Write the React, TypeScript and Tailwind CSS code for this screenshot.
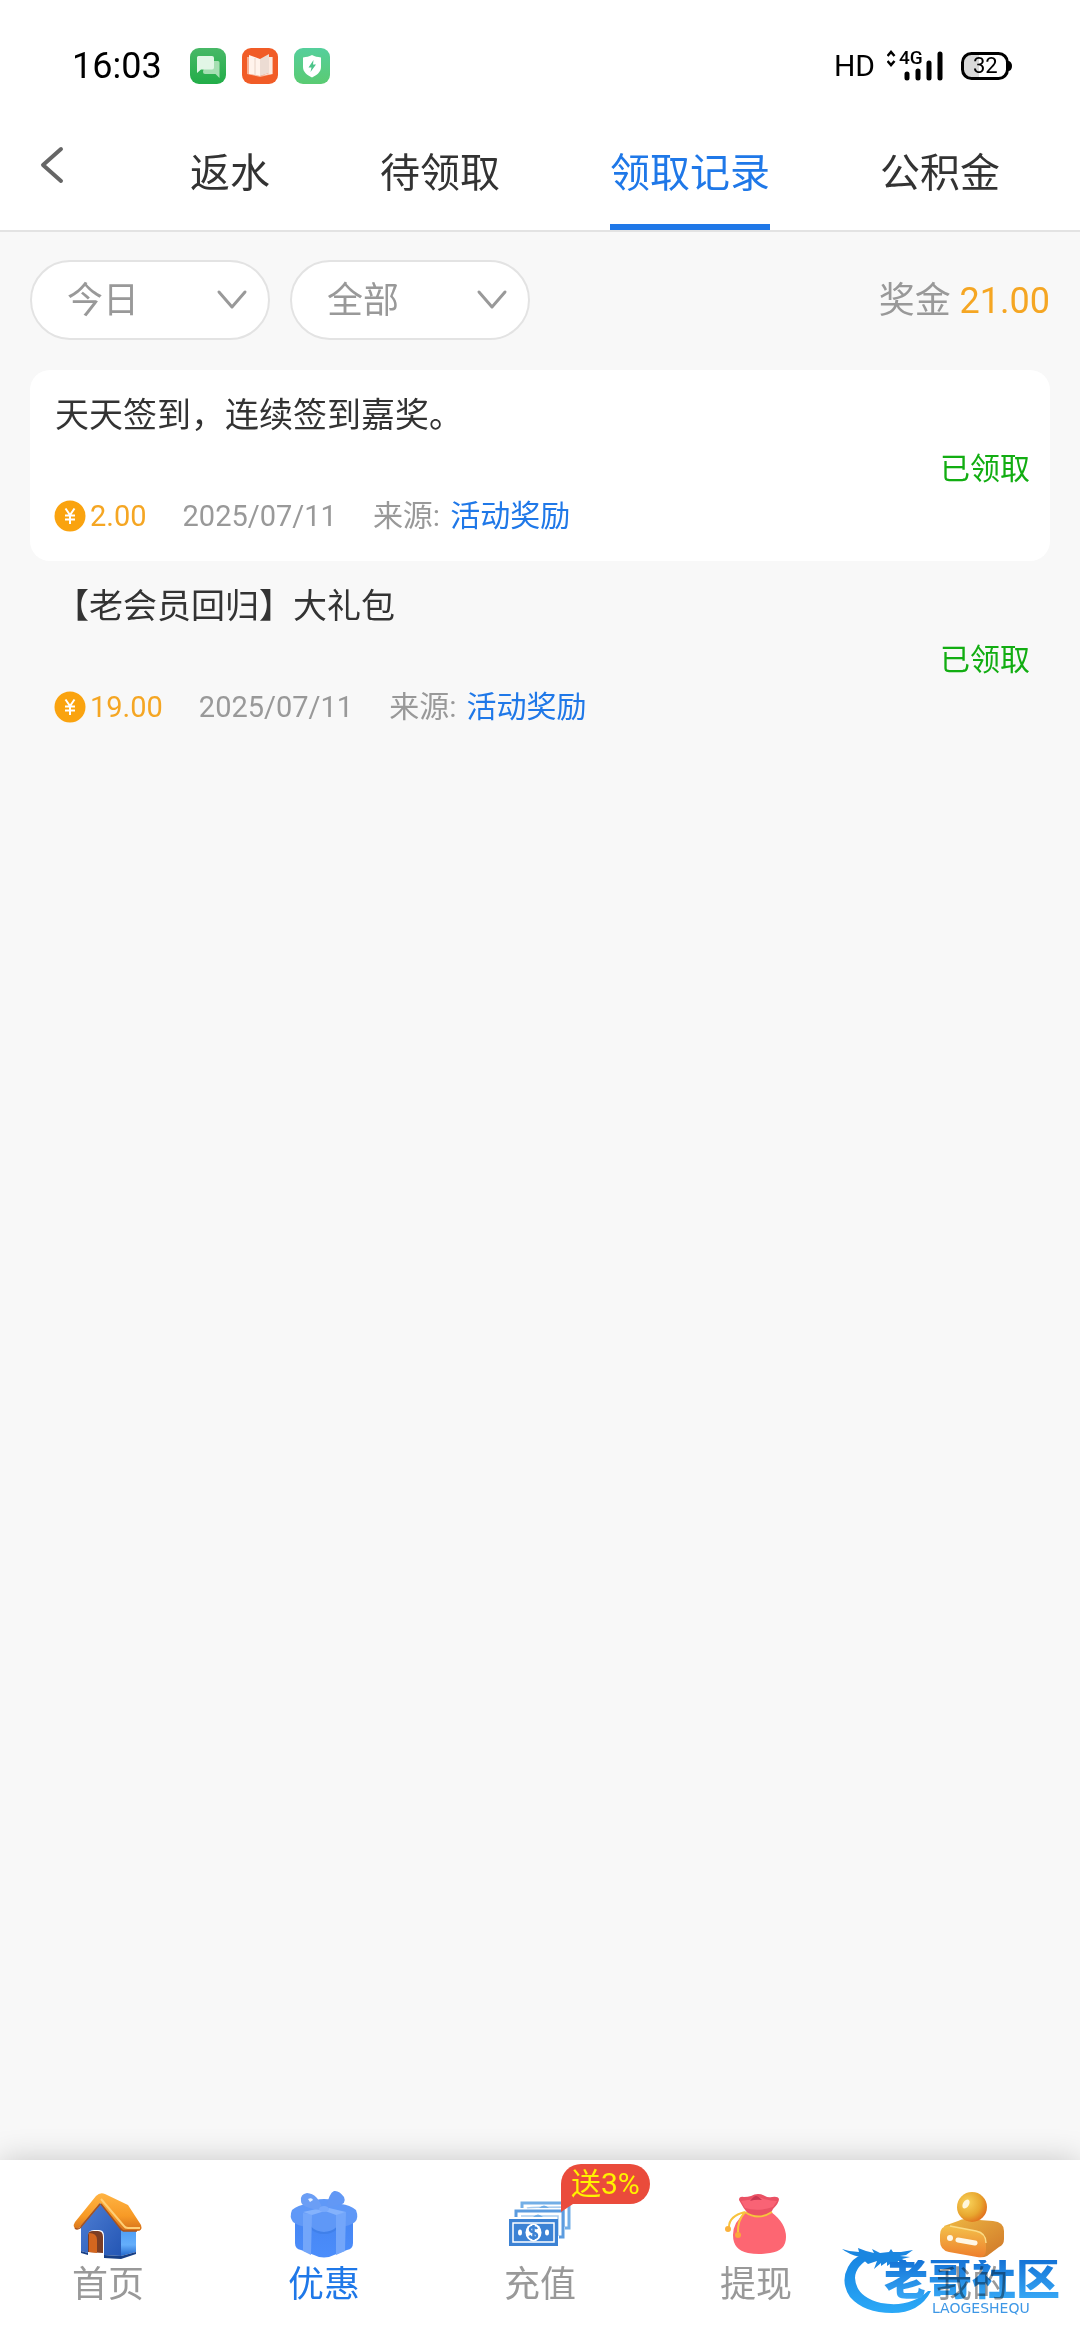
import { useState } from 'react'

const tabs = ['返水', '待领取', '领取记录', '公积金']

const records = [
  { id: 1, title: '天天签到，连续签到嘉奖。', amount: '2.00', date: '2025/07/11', source: '活动奖励', status: '已领取' },
  { id: 2, title: '【老会员回归】大礼包', amount: '19.00', date: '2025/07/11', source: '活动奖励', status: '已领取' },
]

function StatusBar() {
  return (
    <div className="flex h-[120px] items-center bg-white pt-3 pr-[68px] pl-[72px] font-[Roboto,sans-serif] text-black">
      <span className="text-[36px] leading-9">16:03</span>

      {/* Notifications */}
      <div className="ml-7 flex gap-4">
        <svg className="size-9" viewBox="0 0 36 36">
          <defs>
            <linearGradient id="msg" x1="0" y1="0" x2="0" y2="1">
              <stop offset="0" stopColor="#48b867" />
              <stop offset="1" stopColor="#22ad48" />
            </linearGradient>
          </defs>
          <rect width="36" height="36" rx="9" fill="url(#msg)" />
          <path d="M15 13h13a1.500 1.500 0 0 1 1.500 1.500V30l-4-4H15a2 2 0 0 1-2-2z" fill="#a5dfb2" />
          <path d="M8.500 8H22a2 2 0 0 1 2 2v9.500a2 2 0 0 1-2 2H11L7 25V9.500A1.500 1.500 0 0 1 8.500 8z" fill="#e2f6e6" />
        </svg>
        <svg className="size-9" viewBox="0 0 36 36">
          <rect width="36" height="36" rx="9" fill="#f15c27" />
          <path d="M5 9h3v17l10 2 10-2V9h3v17l-13 3L5 26z" fill="#f8b093" />
          <path d="M7 7l11 4v17L7 26z" fill="#fff3ec" />
          <path d="M18 11l9-5v19l-9 3z" fill="#ecdcd3" />
          <path d="M27 9h3v17l-12 2 9-3z" fill="#fbe9df" />
          <path d="M13 10v17" stroke="#e8d2c6" strokeWidth="1" />
        </svg>
        <svg className="size-9" viewBox="0 0 36 36">
          <defs>
            <linearGradient id="guard" x1="0" y1="0" x2="0" y2="1">
              <stop offset="0" stopColor="#55cf9c" />
              <stop offset="1" stopColor="#5acb72" />
            </linearGradient>
          </defs>
          <rect width="36" height="36" rx="9" fill="url(#guard)" />
          <path d="M18 7c3 1.500 5.500 2 9 2.500v9.500c0 5-4 8-9 10.500-5-2.500-9-5.500-9-10.500V9.500C12.500 9 15 8.500 18 7z" fill="#fff" />
          <path d="M19.500 12l-5 7.500h3L16.500 24l5.500-7.500h-3z" fill="#4cc58a" />
        </svg>
      </div>

      <span className="ml-auto text-[30px] leading-9">HD</span>

      {/* Signal */}
      <div className="relative ml-3 h-8 w-14">
        <svg className="size-full" viewBox="0 0 56 32" fill="none" stroke="#000">
          <path d="M0.500 6l3.500-4 3.500 4M0.500 11l3.500 4 3.500-4" strokeWidth="2.500" />
          <g strokeWidth="5" strokeLinecap="round">
            <path d="M20 24v4M31 21v7M42 13v15M53 4v24" />
          </g>
        </svg>
        <span className="absolute top-0 left-3 text-[19px] leading-4 font-medium">4G</span>
      </div>

      {/* Battery */}
      <div className="relative ml-[18px] h-7 w-[51px]">
        <svg className="size-full" viewBox="0 0 51 28">
          <path d="M11 2h7v24h-7a9 9 0 0 1-9-9v-6a9 9 0 0 1 9-9z" fill="#d9d9d9" />
          <rect x="1.500" y="1.500" width="45" height="25" rx="9" fill="none" stroke="#000" strokeWidth="3" />
          <path d="M47 9c2.500 0 4 2 4 5s-1.500 5-4 5z" />
        </svg>
        <span className="absolute top-0 left-3 text-[22px] leading-7">32</span>
      </div>
    </div>
  )
}

function Filter({ label, options }: { label: string; options: string[] }) {
  return (
    <div className="relative w-60">
      <select
        aria-label={label}
        className="block h-20 w-full appearance-none rounded-full border-2 border-[#e3e3e3] bg-white pt-[2px] pl-[35px] text-[36px] text-[#999]"
      >
        {options.map((o) => (
          <option key={o}>{o}</option>
        ))}
      </select>
      <svg className="pointer-events-none absolute top-[29px] right-[22px] h-[22px] w-8" viewBox="0 0 32 22" fill="none">
        <path d="M3 3l13 15L29 3" stroke="#999" strokeWidth="3" strokeLinecap="round" strokeLinejoin="round" />
      </svg>
    </div>
  )
}

function Coin() {
  return (
    <svg className="size-8" viewBox="0 0 32 32">
      <circle cx="16" cy="16" r="15.500" fill="#faa30f" />
      <path d="M11.500 8.500L16 15l4.500-6.500M16 15v9M11 15.500h10M11 19.500h10" fill="none" stroke="#fff" strokeWidth="2" />
    </svg>
  )
}

function HomeIcon() {
  return (
    <svg className="h-[70px] w-[72px]" viewBox="0 0 72 70">
      <defs>
        <linearGradient id="roof" x1="0" y1="0" x2="0" y2="1">
          <stop offset="0" stopColor="#ffb443" />
          <stop offset="0.600" stopColor="#f79a26" />
          <stop offset="1" stopColor="#d5701a" />
        </linearGradient>
        <linearGradient id="wall" x1="0" y1="0" x2="1" y2="1">
          <stop offset="0" stopColor="#4f7fd4" />
          <stop offset="1" stopColor="#2456b4" />
        </linearGradient>
        <linearGradient id="side" x1="0" y1="0" x2="0" y2="1">
          <stop offset="0" stopColor="#4d9df5" />
          <stop offset="0.600" stopColor="#64aefb" />
          <stop offset="1" stopColor="#2468cc" />
        </linearGradient>
      </defs>
      <path d="M49 38h15v24l-15 4z" fill="url(#side)" />
      <path d="M9 34L28 12l21 26v28l-17-1V46q0-6-5-6h-5q-6 0-6 6v17l-7-2z" fill="url(#wall)" />
      <path d="M16 45q0-4 5-4h5q5 0 5 6v16l-15-1z" fill="#7c3e25" />
      <path d="M17 43q8 0 8 7v13l-8-1z" fill="#d4661f" />
      <path d="M9 61l7 2v2l-7-2zM32 65l17 1 15-4v2l-15 5-17-1z" fill="#173f86" />
      <path d="M24 6q4-4 9-2l23 11 13 20q2 6-4 6H53q-3 0-5-3L28 13 8 37q-4 4-6 0-1-2 1-5z" fill="url(#roof)" />
      <path d="M29 9l23 27q1 2 4 2h12" fill="none" stroke="#ffcf75" strokeWidth="2" />
      <path d="M28 14L8 38q-3 2-5 0M29 14l19 24q2 3 5 3h12" fill="none" stroke="#a9521c" strokeWidth="1.500" />
    </svg>
  )
}

function GiftIcon() {
  return (
    <svg className="h-[70px] w-[72px]" viewBox="0 0 72 70">
      <defs>
        <linearGradient id="box" x1="0" y1="0" x2="0" y2="1">
          <stop offset="0" stopColor="#4686f3" />
          <stop offset="1" stopColor="#4b8dfb" />
        </linearGradient>
      </defs>
      <path d="M7 28h58v25q0 6-6 7l-13 5q-10 5-20 0l-13-5q-6-1-6-7z" fill="url(#box)" />
      <path d="M4 20q6-5 15-6 8-5 17-5t17 5q9 1 15 6 3 8-1 12-5 4-14 5-7 5-17 5t-17-5Q10 36 5 32q-4-5-1-12z" fill="#5f98f7" />
      <path d="M22 37q6 6 14 6t14-6" fill="none" stroke="#4080ea" strokeWidth="2" />
      <path d="M15 23l9 1-1 41-8-4zM48 24l10-2-1 39-9 4z" fill="#73a6fa" />
      <path d="M15 22l18-4q4 2 8 0l17 4-10 3-11-4-13 4z" fill="#84b2fc" />
      <path d="M34 18q-4-14-15-15-7 1-6 8 0 7 20 9z" fill="#6b9ef5" />
      <path d="M38 18Q41 3 46 1q5-1 10 6 3 7-6 8z" fill="#6298f5" />
      <path d="M20 9q4-2 5 1l-3 2z" fill="#e4efff" />
      <ellipse cx="36" cy="19" rx="5" ry="3" fill="#78a9fb" />
    </svg>
  )
}

function MoneyIcon() {
  return (
    <svg className="h-[70px] w-[72px]" viewBox="0 0 72 70" fill="none">
      <path d="M18 18V13H65V38H61" stroke="#72aee6" strokeWidth="3" />
      <path d="M23 18q1-1 37-1v20" stroke="#a9cdf0" strokeWidth="1.500" />
      <path d="M35 18q5-5 10 0z" fill="#72aee6" />
      <path d="M12 27v-6H59V47H55" stroke="#5c9cdf" strokeWidth="3" />
      <path d="M17 26h37v20" stroke="#a9cdf0" strokeWidth="1.500" />
      <path d="M29 27q5-5 10 0z" fill="#72aee6" />
      <path d="M5 29h49v27H5z" fill="#3c82d4" />
      <path d="M9 33h41v19H9z" stroke="#fff" strokeWidth="1.500" />
      <ellipse cx="29.500" cy="42.500" rx="8" ry="9" fill="#fff" />
      <ellipse cx="16" cy="42.500" rx="2" ry="3" fill="#fff" />
      <ellipse cx="43" cy="42.500" rx="2" ry="3" fill="#fff" />
      <path d="M33 39q-1-2-3.500-2-3.500 0-3.500 2.500 0 2 3.500 3t3.500 3q0 2.500-3.500 2.500-3 0-4-2.500M29.500 35v15" stroke="#3c82d4" strokeWidth="2.500" />
    </svg>
  )
}

function BagIcon() {
  return (
    <svg className="h-[70px] w-[72px]" viewBox="0 0 72 70">
      <path d="M26 22h25q15 11 15 25 0 14-16 16-11 2-22 0-15-3-15-18 0-13 13-23z" fill="#fd6672" />
      <path d="M19 10q0-4 5-3 4 0 7-1 7-4 14 0 3 2 7 1 6-1 7 2 0 4-6 10-2 5-7 7-9 3-17-1-6-7-10-15z" fill="#ea5164" />
      <path d="M21 11q7-1 14-2 4-3 9 0 7 2 13 2l-4 6q-15 5-28 1z" fill="#f96375" />
      <path d="M30 11q4-5 6-5t6 4q-6-1-12 1z" fill="#c93750" />
      <path d="M25 22q13 9 27 0" fill="none" stroke="#f8c33d" strokeWidth="2" />
      <path d="M25 22Q9 26 9 37M25 22q-8 9-7 21" fill="none" stroke="#f8c33d" strokeWidth="2" />
      <circle cx="8" cy="39" r="3" fill="#fbb23c" />
      <circle cx="18" cy="45" r="3" fill="#fba73c" />
    </svg>
  )
}

function MineIcon() {
  return (
    <svg className="h-[70px] w-[72px]" viewBox="0 0 72 70">
      <defs>
        <radialGradient id="ball" cx="0.350" cy="0.350" r="0.750">
          <stop offset="0" stopColor="#f9d35b" />
          <stop offset="0.600" stopColor="#e8a72f" />
          <stop offset="1" stopColor="#e0661a" />
        </radialGradient>
        <linearGradient id="base" x1="0" y1="0" x2="0" y2="1">
          <stop offset="0" stopColor="#f3c04b" />
          <stop offset="1" stopColor="#ee7f2c" />
        </linearGradient>
        <linearGradient id="back" x1="0" y1="0" x2="1" y2="1">
          <stop offset="0" stopColor="#eeb843" />
          <stop offset="1" stopColor="#cf7628" />
        </linearGradient>
      </defs>
      <path d="M8 36l14-5q3-2 8-2l27 2q11 1 11 10v8q0 6-5 8l-12 9q-4 2-8 1L20 57z" fill="url(#back)" />
      <path d="M14 36l26 5q10 2 10 12v6q0 10-9 8l-28-5Q4 60 4 51v-6q0-10 10-9z" fill="url(#base)" />
      <path d="M14 36l26 5q10 2 10 12" fill="none" stroke="#fbdc86" strokeWidth="1.500" />
      <circle cx="36" cy="17" r="15" fill="url(#ball)" />
      <ellipse cx="30" cy="14" rx="3" ry="5" transform="rotate(30 30 14)" fill="#fff7dc" />
      <circle cx="14" cy="48" r="3" fill="#fff7e6" />
      <path d="M22 50l17 3" stroke="#fff7e6" strokeWidth="5" strokeLinecap="round" />
    </svg>
  )
}

function Watermark() {
  return (
    <div className="pointer-events-none absolute right-4 bottom-6 h-[72px] w-[224px] mix-blend-multiply">
      <svg className="size-full" viewBox="0 0 224 72" fill="none">
        <defs>
          <linearGradient id="dragon" x1="0" y1="0" x2="0" y2="1">
            <stop offset="0" stopColor="#1684e2" />
            <stop offset="1" stopColor="#2ba9f7" />
          </linearGradient>
        </defs>
        <path
          d="M32 13Q15 22 15 34q1 19 26 25 29 5 47-12h3Q80 69 52 69 24 69 10 53 0 38 8 23 13 14 21 11z"
          fill="url(#dragon)"
        />
        <path
          d="M2 5q8 3 17 3l-1-4 8 3 8 2-2-4 8 4 9-1 2-3 2 3 8 0 12-2-7 5-6 1 10 1-8 2 7 4-11-2-1 4-4-3-6 4 0-4-6 4 0-3-7 6 3-8-9 3-8-7Q8 10 2 5z"
          fill="#1a86e0"
        />
      </svg>
      <span className="absolute top-4 left-[44px] bg-linear-to-b from-[#1573d6] to-[#38a9f6] bg-clip-text text-[44px] leading-10 font-black whitespace-nowrap text-transparent">
        老哥社区
      </span>
      <span className="absolute top-[57px] left-[92px] font-['DejaVu_Sans',sans-serif] text-[14px] leading-[14px] text-[#3d97e6]">
        LAOGESHEQU
      </span>
    </div>
  )
}

const navItems = [
  { label: '首页', icon: HomeIcon },
  { label: '优惠', icon: GiftIcon },
  { label: '充值', icon: MoneyIcon, badge: '送3%' },
  { label: '提现', icon: BagIcon },
  { label: '我的', icon: MineIcon },
]

export default function App() {
  const [tab, setTab] = useState('领取记录')
  const [page, setPage] = useState('优惠')

  return (
    <div lang="zh-CN" className="flex min-h-screen flex-col bg-[#f8f8f8] font-[Roboto,'Noto_Sans_CJK_SC',sans-serif]">
      <StatusBar />

      {/* Header */}
      <header className="flex items-start border-b-2 border-[#e3e3e3] bg-white">
        <button aria-label="返回" className="flex h-[90px] w-[135px] items-center pl-9">
          <svg className="h-10 w-8" viewBox="0 0 32 40" fill="none">
            <path d="M25 4L7 20l18 16" stroke="#666" strokeWidth="4" strokeLinecap="round" strokeLinejoin="round" />
          </svg>
        </button>
        <nav className="flex flex-1 justify-around pr-[25px]">
          {tabs.map((t) => (
            <button
              key={t}
              onClick={() => setTab(t)}
              className={`h-[110px] border-b-6 pt-1 text-[40px] ${t === tab ? 'border-[#1f78e8] text-[#1f78e8]' : 'border-transparent text-[#333]'}`}
            >
              {t}
            </button>
          ))}
        </nav>
      </header>

      <main className="flex-1 px-[30px] pt-7">
        {/* Filters */}
        <div className="flex items-center gap-5">
          <Filter label="日期" options={['今日', '昨日', '近7日']} />
          <Filter label="类型" options={['全部', '活动奖励']} />
          <p className="ml-auto pt-[2px] text-[36px] text-[#999]">
            奖金 <span className="text-[#f5a623]">21.00</span>
          </p>
        </div>

        {/* Records */}
        <ul className="mt-[30px]">
          {records.map((r) => (
            <li key={r.id} className="rounded-[20px] px-5 pt-[22px] pb-[29px] odd:bg-white">
              <h2 className="pl-[5px] text-[34px] leading-[46px] text-[#333]">{r.title}</h2>
              <p className="my-[9px] text-right text-[30px] leading-[44px] text-[#12ad12]">{r.status}</p>
              <div className="flex items-center pl-1 text-[29px] leading-8 text-[#999]">
                <Coin />
                <span className="ml-1 text-[#f5a623]">{r.amount}</span>
                <time className="ml-9">{r.date}</time>
                <span className="ml-9 text-[30px]">来源:</span>
                <a href="#" className="ml-[10px] text-[30px] text-[#1f78e8]">{r.source}</a>
              </div>
            </li>
          ))}
        </ul>
      </main>

      {/* Bottom nav */}
      <footer className="relative bg-white shadow-[0_0_30px_rgba(0,0,0,0.2)]">
        <nav className="flex h-[180px]">
          {navItems.map(({ label, icon: Icon, badge }) => (
            <button
              key={label}
              onClick={() => setPage(label)}
              className={`relative flex flex-1 flex-col items-center pt-[30px] text-[36px] leading-[50px] ${label === page ? 'text-[#1f78e8]' : 'text-[#999]'}`}
            >
              <Icon />
              {label}
              {badge && (
                <span className="absolute top-1 left-[129px] h-10 rounded-full rounded-bl-none bg-[#ea4b3b] px-[10px] text-[30px] leading-10 whitespace-nowrap text-[#fff200]">
                  <svg className="absolute top-[38px] left-0 h-[10px] w-3" viewBox="0 0 12 10">
                    <path d="M0 0h12v2L0 10z" fill="#ea4b3b" />
                  </svg>
                  {badge}
                </span>
              )}
            </button>
          ))}
        </nav>
        <Watermark />
      </footer>
    </div>
  )
}
